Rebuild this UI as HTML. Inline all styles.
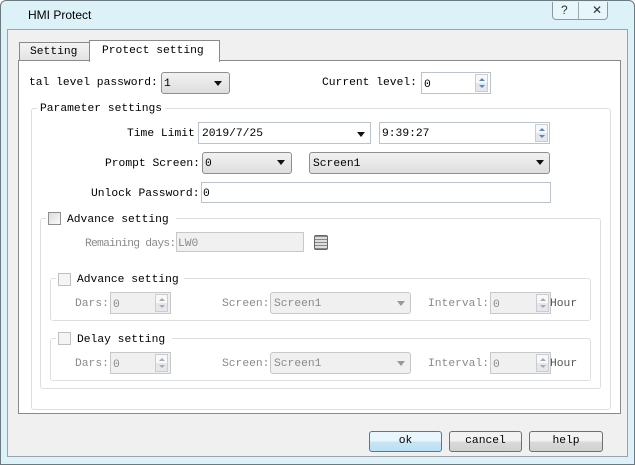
<!DOCTYPE html>
<html><head><style>
*{box-sizing:border-box;margin:0;padding:0}
body{width:635px;height:465px;overflow:hidden;background:#fff;position:relative;font-family:"Liberation Mono",monospace;font-size:11.3px;color:#000}
.a{position:absolute}
.t{position:absolute;white-space:nowrap;line-height:14px}
.g{color:#8a8a8a}
.combo{position:absolute;border:1px solid #8e8f8f;border-radius:3px;background:linear-gradient(#f2f2f2,#dedede)}
.edit{position:absolute;border:1px solid #bcc3cb;background:#fff}
.dis{background:#f0f0f0;border-color:#c8c8c8}
.arr{position:absolute;width:0;height:0;border-left:4px solid transparent;border-right:4px solid transparent;border-top:5px solid #111}
.grp{position:absolute;border:1px solid #dcdfe2;border-radius:3px}
.cb{position:absolute;width:13px;height:13px;border:1px solid #8f8f8f;background:linear-gradient(135deg,#ddd,#fafafa)}
.spin{position:absolute;width:13px;border:1px solid #c9cdd2;background:linear-gradient(#f6f8fa 50%,#e4e8ec 50%)}
.spin::before,.spin::after{content:"";position:absolute;left:3px;width:0;height:0;border-left:3px solid transparent;border-right:3px solid transparent}
.spin::before{top:3px;border-bottom:3px solid #5a86c0}
.spin::after{bottom:3px;border-top:3px solid #5a86c0}
.gs::before{border-bottom-color:#aaa}.gs::after{border-top-color:#aaa}
.btn{position:absolute;border:1px solid #707070;border-radius:3px;background:linear-gradient(#f2f2f2 45%,#d9d9d9 55%,#d0d0d0);text-align:center;line-height:18px}
</style></head><body>
<div class="a" style="left:0;top:0;width:635px;height:465px;background:#dcf2f8;border:1px solid #6a7a80;border-radius:6px 6px 0 0"></div>
<div class="t" style="left:28px;top:8px;font-family:'Liberation Sans',sans-serif;font-size:12px;color:#000">HMI Protect</div>
<div class="a" style="left:552px;top:2px;width:56px;height:18px;border:1px solid #8a9aa0;border-top:none;border-radius:0 0 4px 4px;background:#e6f6fb"></div>
<div class="a" style="left:578px;top:2px;width:1px;height:17px;background:#9aa"></div>
<div class="t" style="left:561px;top:3px;font-family:'Liberation Sans';font-size:12px;color:#333">?</div>
<div class="t" style="left:592px;top:3px;font-family:'Liberation Sans';font-size:12px;color:#333">✕</div>
<div class="a" style="left:7px;top:29px;width:621px;height:428px;background:#f0f0f0;border:1px solid #9aa4a8"></div>
<div class="a" style="left:19px;top:42px;width:71px;height:20px;border:1px solid #8a8a8a;background:linear-gradient(#f4f4f4,#e2e2e2)"></div>
<div class="t" style="left:30px;top:45px">Setting</div>
<div class="a" style="left:18px;top:60px;width:603px;height:354px;background:#fff;border:1px solid #8a8a8a"></div>
<div class="a" style="left:89px;top:40px;width:131px;height:22px;border:1px solid #8a8a8a;border-bottom:none;background:#fff"></div>
<div class="t" style="left:102px;top:44px">Protect setting</div>
<div class="t" style="left:29px;top:76px">tal level password:</div>
<div class="combo" style="left:161px;top:72px;width:69px;height:22px"></div>
<div class="t" style="left:164px;top:77px">1</div><div class="arr" style="left:214px;top:81px"></div>
<div class="t" style="left:322px;top:76px">Current level:</div>
<div class="edit" style="left:421px;top:72px;width:70px;height:22px"></div>
<div class="t" style="left:424px;top:78px">0</div>
<div class="spin" style="left:475px;top:74px;height:18px"></div>
<div class="grp" style="left:31px;top:108px;width:580px;height:302px"></div>
<div class="t" style="left:37px;top:102px;background:#fff;padding:0 3px">Parameter settings</div>
<div class="t" style="left:127px;top:127px">Time Limit</div>
<div class="edit" style="left:198px;top:122px;width:173px;height:22px"></div>
<div class="t" style="left:202px;top:127px">2019/7/25</div><div class="arr" style="left:357px;top:132px"></div>
<div class="edit" style="left:379px;top:122px;width:171px;height:22px"></div>
<div class="t" style="left:382px;top:127px">9:39:27</div>
<div class="spin" style="left:535px;top:124px;height:18px"></div>
<div class="t" style="left:105px;top:157px">Prompt Screen:</div>
<div class="combo" style="left:202px;top:152px;width:90px;height:22px"></div>
<div class="t" style="left:205px;top:157px">0</div><div class="arr" style="left:277px;top:160px"></div>
<div class="combo" style="left:309px;top:152px;width:241px;height:22px"></div>
<div class="t" style="left:313px;top:157px">Screen1</div><div class="arr" style="left:536px;top:160px"></div>
<div class="t" style="left:91px;top:187px">Unlock Password:</div>
<div class="edit" style="left:201px;top:182px;width:350px;height:21px"></div>
<div class="t" style="left:203px;top:187px">0</div>
<div class="grp" style="left:40px;top:218px;width:561px;height:171px"></div>
<div class="a" style="left:46px;top:210px;width:130px;height:16px;background:#fff"></div>
<div class="cb" style="left:48px;top:212px"></div>
<div class="t" style="left:67px;top:213px">Advance setting</div>
<div class="t g" style="left:85px;top:237px;letter-spacing:-0.75px">Remaining days:</div>
<div class="edit dis" style="left:176px;top:232px;width:128px;height:20px"></div>
<div class="t g" style="left:178px;top:237px">LW0</div>
<div class="a" style="left:314px;top:235px;width:14px;height:15px;border:1px solid #666;border-radius:2px;background:repeating-linear-gradient(#888 0 1px,#ddd 1px 3px)"></div>
<div class="grp" style="left:50px;top:278px;width:541px;height:43px"></div>
<div class="a" style="left:56px;top:270px;width:128px;height:16px;background:#fff"></div>
<div class="cb" style="left:58px;top:273px;border-color:#c0c0c0;background:#f4f4f4"></div>
<div class="t" style="left:77px;top:273px">Advance setting</div>
<div class="grp" style="left:50px;top:338px;width:541px;height:43px"></div>
<div class="a" style="left:56px;top:330px;width:116px;height:16px;background:#fff"></div>
<div class="cb" style="left:58px;top:332px;border-color:#c0c0c0;background:#f4f4f4"></div>
<div class="t" style="left:77px;top:333px">Delay setting</div>
<div class="t g" style="left:75px;top:297px">Dars:</div>
<div class="edit dis" style="left:110px;top:292px;width:61px;height:22px"></div>
<div class="t g" style="left:113px;top:298px">0</div>
<div class="spin gs" style="left:155px;top:294px;height:18px"></div>
<div class="t g" style="left:222px;top:297px">Screen:</div>
<div class="edit dis" style="left:270px;top:292px;width:141px;height:22px;border-radius:3px"></div>
<div class="t g" style="left:274px;top:297px">Screen1</div>
<div class="arr" style="left:397px;top:301px;border-top-color:#999"></div>
<div class="t g" style="left:428px;top:297px">Interval:</div>
<div class="edit dis" style="left:490px;top:292px;width:61px;height:22px"></div>
<div class="t g" style="left:493px;top:298px">0</div>
<div class="spin gs" style="left:536px;top:294px;height:18px"></div>
<div class="t g" style="left:550px;top:297px;color:#555">Hour</div>
<div class="t g" style="left:75px;top:357px">Dars:</div>
<div class="edit dis" style="left:110px;top:352px;width:61px;height:22px"></div>
<div class="t g" style="left:113px;top:358px">0</div>
<div class="spin gs" style="left:155px;top:354px;height:18px"></div>
<div class="t g" style="left:222px;top:357px">Screen:</div>
<div class="edit dis" style="left:270px;top:352px;width:141px;height:22px;border-radius:3px"></div>
<div class="t g" style="left:274px;top:357px">Screen1</div>
<div class="arr" style="left:397px;top:361px;border-top-color:#999"></div>
<div class="t g" style="left:428px;top:357px">Interval:</div>
<div class="edit dis" style="left:490px;top:352px;width:61px;height:22px"></div>
<div class="t g" style="left:493px;top:358px">0</div>
<div class="spin gs" style="left:536px;top:354px;height:18px"></div>
<div class="t g" style="left:550px;top:357px;color:#555">Hour</div>
<div class="btn" style="left:369px;top:431px;width:73px;height:21px;border-color:#3c7fb1;background:linear-gradient(#eaf6fd 45%,#c4e5f6 55%,#bde0f3)">ok</div>
<div class="btn" style="left:449px;top:431px;width:73px;height:21px">cancel</div>
<div class="btn" style="left:529px;top:431px;width:74px;height:21px">help</div>
</body></html>
